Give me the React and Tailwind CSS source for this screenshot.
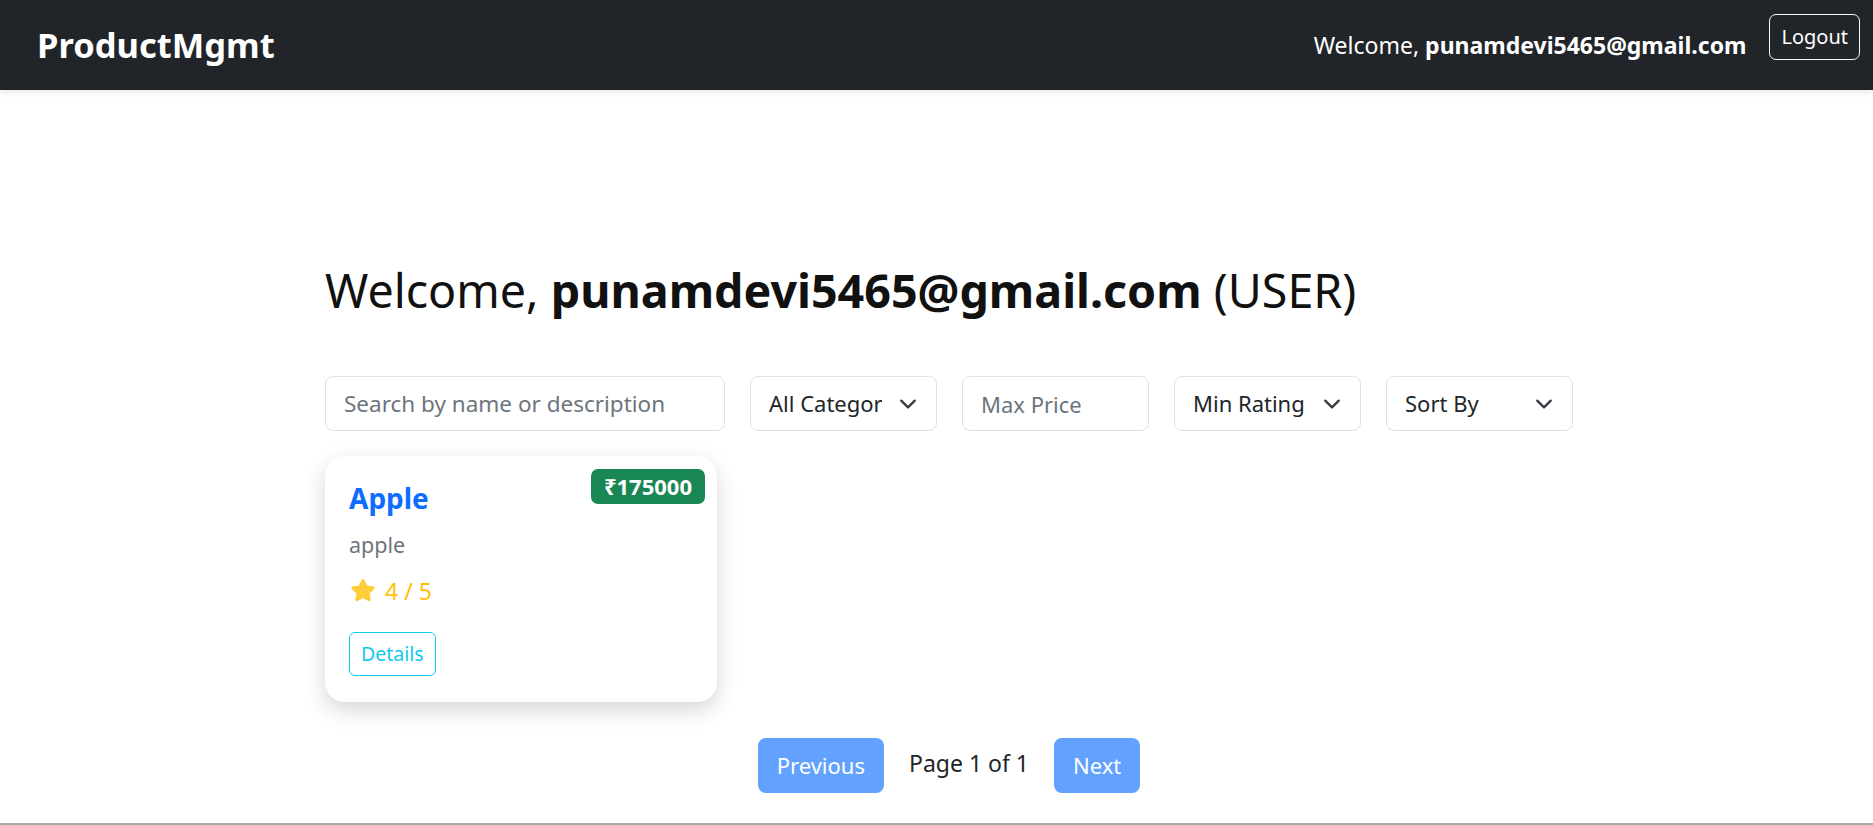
import React from 'react';

const font = { fontFamily: '"Noto Sans", "Open Sans", sans-serif' };

const Chevron = () => (
  <svg
    className="pointer-events-none absolute right-[20px] top-1/2 -translate-y-1/2"
    width="18"
    height="18"
    viewBox="0 0 16 16"
    fill="none"
    stroke="#343a40"
    strokeWidth="2"
    strokeLinecap="round"
    strokeLinejoin="round"
  >
    <path d="M2 5l6 6 6-6" />
  </svg>
);

const Star = () => (
  <svg width="28" height="28" viewBox="0 0 24 24" className="shrink-0">
    <path
      d="M12 3.2l2.6 5.4 5.9.8-4.3 4.1 1 5.9L12 16.6l-5.2 2.8 1-5.9-4.3-4.1 5.9-.8z"
      fill="#ffcd39"
      stroke="#ffcd39"
      strokeWidth="2.8"
      strokeLinejoin="round"
    />
  </svg>
);

const SelectBox = ({ label, options }) => (
  <div className="relative w-[187px]">
    <select
      defaultValue=""
      className="h-[55px] w-full appearance-none rounded-[8px] border border-[#dee2e6] bg-white pl-[18px] pr-[54px] text-[22px] text-[#212529] outline-none"
    >
      <option value="">{label}</option>
      {options.map((o) => (
        <option key={o} value={o}>
          {o}
        </option>
      ))}
    </select>
    <Chevron />
  </div>
);

const ProductCard = () => (
  <div className="relative w-[392px] rounded-[20px] bg-white px-[24px] pt-[20px] pb-[26px] shadow-[0_8px_22px_rgba(0,0,0,0.16)]">
    <span className="absolute right-[12px] top-[13px] rounded-[7px] bg-[#198754] px-[13px] py-[1px] text-[22px] font-bold text-white">
      ₹175000
    </span>
    <h5 className="text-[28px] font-bold leading-[44px] text-[#0d6efd]">Apple</h5>
    <p className="mt-[10px] text-[21.5px] leading-[30px] text-[#6c757d]">apple</p>
    <div className="mt-[16px] flex items-center gap-[8px] text-[23px] leading-[30px] text-[#ffc107]">
      <Star />
      <span>4 / 5</span>
    </div>
    <button className="mt-[26px] h-[44px] rounded-[6px] border border-[#0dcaf0] px-[11px] text-[19.5px] text-[#0dcaf0]">
      Details
    </button>
  </div>
);

export default function App() {
  return (
    <div className="flex min-h-screen flex-col bg-white text-[#212529]" style={font}>
      <nav className="flex h-[90px] items-center justify-between bg-[#212529] pl-[37px] pr-[13px] shadow-[0_3px_6px_rgba(0,0,0,0.08)]">
        <span className="text-[34.5px] font-bold text-white">ProductMgmt</span>
        <div className="flex items-center gap-[23px]">
          <span className="text-[23px] text-white">
            Welcome, <b>punamdevi5465@gmail.com</b>
          </span>
          <button className="mb-[16px] h-[46px] rounded-[7px] border border-[#f8f9fa] px-[11px] text-[20px] text-white">
            Logout
          </button>
        </div>
      </nav>

      <main className="ml-[325px] w-[1248px]">
        <h1 className="mt-[170px] text-[46.6px] leading-[60px] text-[#111]">
          Welcome, <b>punamdevi5465@gmail.com</b> (USER)
        </h1>

        <div className="mt-[56px] flex gap-[25px]">
          <input
            type="text"
            placeholder="Search by name or description"
            className="h-[55px] w-[400px] rounded-[8px] border border-[#dee2e6] px-[18px] text-[22.5px] text-[#212529] outline-none placeholder:text-[#6c757d]"
          />
          <SelectBox label="All Categories" options={['Fruits', 'Electronics']} />
          <input
            type="number"
            placeholder="Max Price"
            className="h-[55px] w-[187px] rounded-[8px] border border-[#dee2e6] px-[18px] text-[22px] text-[#212529] outline-none placeholder:text-[#6c757d]"
          />
          <SelectBox label="Min Rating" options={['1', '2', '3', '4', '5']} />
          <SelectBox label="Sort By" options={['Price', 'Rating']} />
        </div>

        <div className="mt-[25px] flex">
          <ProductCard />
        </div>

        <div className="mt-[36px] flex items-center justify-center gap-[25px]">
          <button className="h-[55px] rounded-[8px] bg-[#62a1fe] px-[19px] text-[22px] text-white">
            Previous
          </button>
          <span className="mb-[4px] text-[23px]">Page 1 of 1</span>
          <button className="h-[55px] rounded-[8px] bg-[#62a1fe] px-[19px] text-[22px] text-white">
            Next
          </button>
        </div>
      </main>

      <div className="mt-auto h-[2px] bg-[#a9a9a9]" />
    </div>
  );
}
